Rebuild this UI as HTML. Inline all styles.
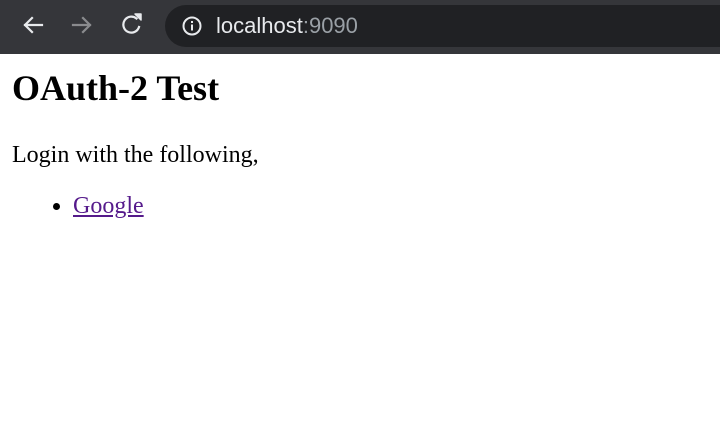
<!DOCTYPE html>
<html><head><meta charset="utf-8"><style>
html,body{margin:0;padding:0;background:#fff;width:720px;height:437px;overflow:hidden}
.bar{position:absolute;left:0;top:0;width:720px;height:54px;background:#35363a}
.omni{position:absolute;left:165px;top:5px;width:600px;height:42px;border-radius:21px;background:#202124}
.url{position:absolute;left:216px;top:13px;font:22px "Liberation Sans",sans-serif;color:#e8eaed}
.url span{color:#9aa0a6}
svg{position:absolute}
.content{position:absolute;left:12px;top:54px;font-family:"Liberation Serif",serif;color:#000}
h1{font-size:36px;margin:14px 0 0;font-weight:bold;line-height:41px}
p{font-size:24px;margin:33px 0 0;line-height:27px}
ul{margin:24px 0 0;padding-left:61px;font-size:24px;line-height:27px}
a{color:#551a8b}
</style></head><body>
<div class="bar"></div>
<svg width="720" height="54" style="left:0;top:0">
 <g fill="none" stroke-width="2.2" stroke-linecap="square">
  <path d="M42 25H25M32 18l-7 7 7 7" stroke="#e8eaed"/>
  <path d="M73 25h17M83 18l7 7-7 7" stroke="#8a8b8e"/>
  <path d="M139 27a8 8 0 1 1-2.5-8.5" stroke="#e8eaed"/>
 </g>
 <path d="M135 14h6v6z" fill="#e8eaed" stroke="#e8eaed" stroke-width="1.5" stroke-linejoin="round"/>
</svg>
<div class="omni"></div>
<svg width="24" height="24" style="left:180px;top:14px"><circle cx="12" cy="12" r="8.5" fill="none" stroke="#e8eaed" stroke-width="2"/><rect x="11" y="10.5" width="2" height="6" fill="#e8eaed"/><rect x="11" y="7" width="2" height="2" fill="#e8eaed"/></svg>
<div class="url">localhost<span>:9090</span></div>
<div class="content">
<h1>OAuth-2 Test</h1>
<p>Login with the following,</p>
<ul><li><a href="#">Google</a></li></ul>
</div>
</body></html>
